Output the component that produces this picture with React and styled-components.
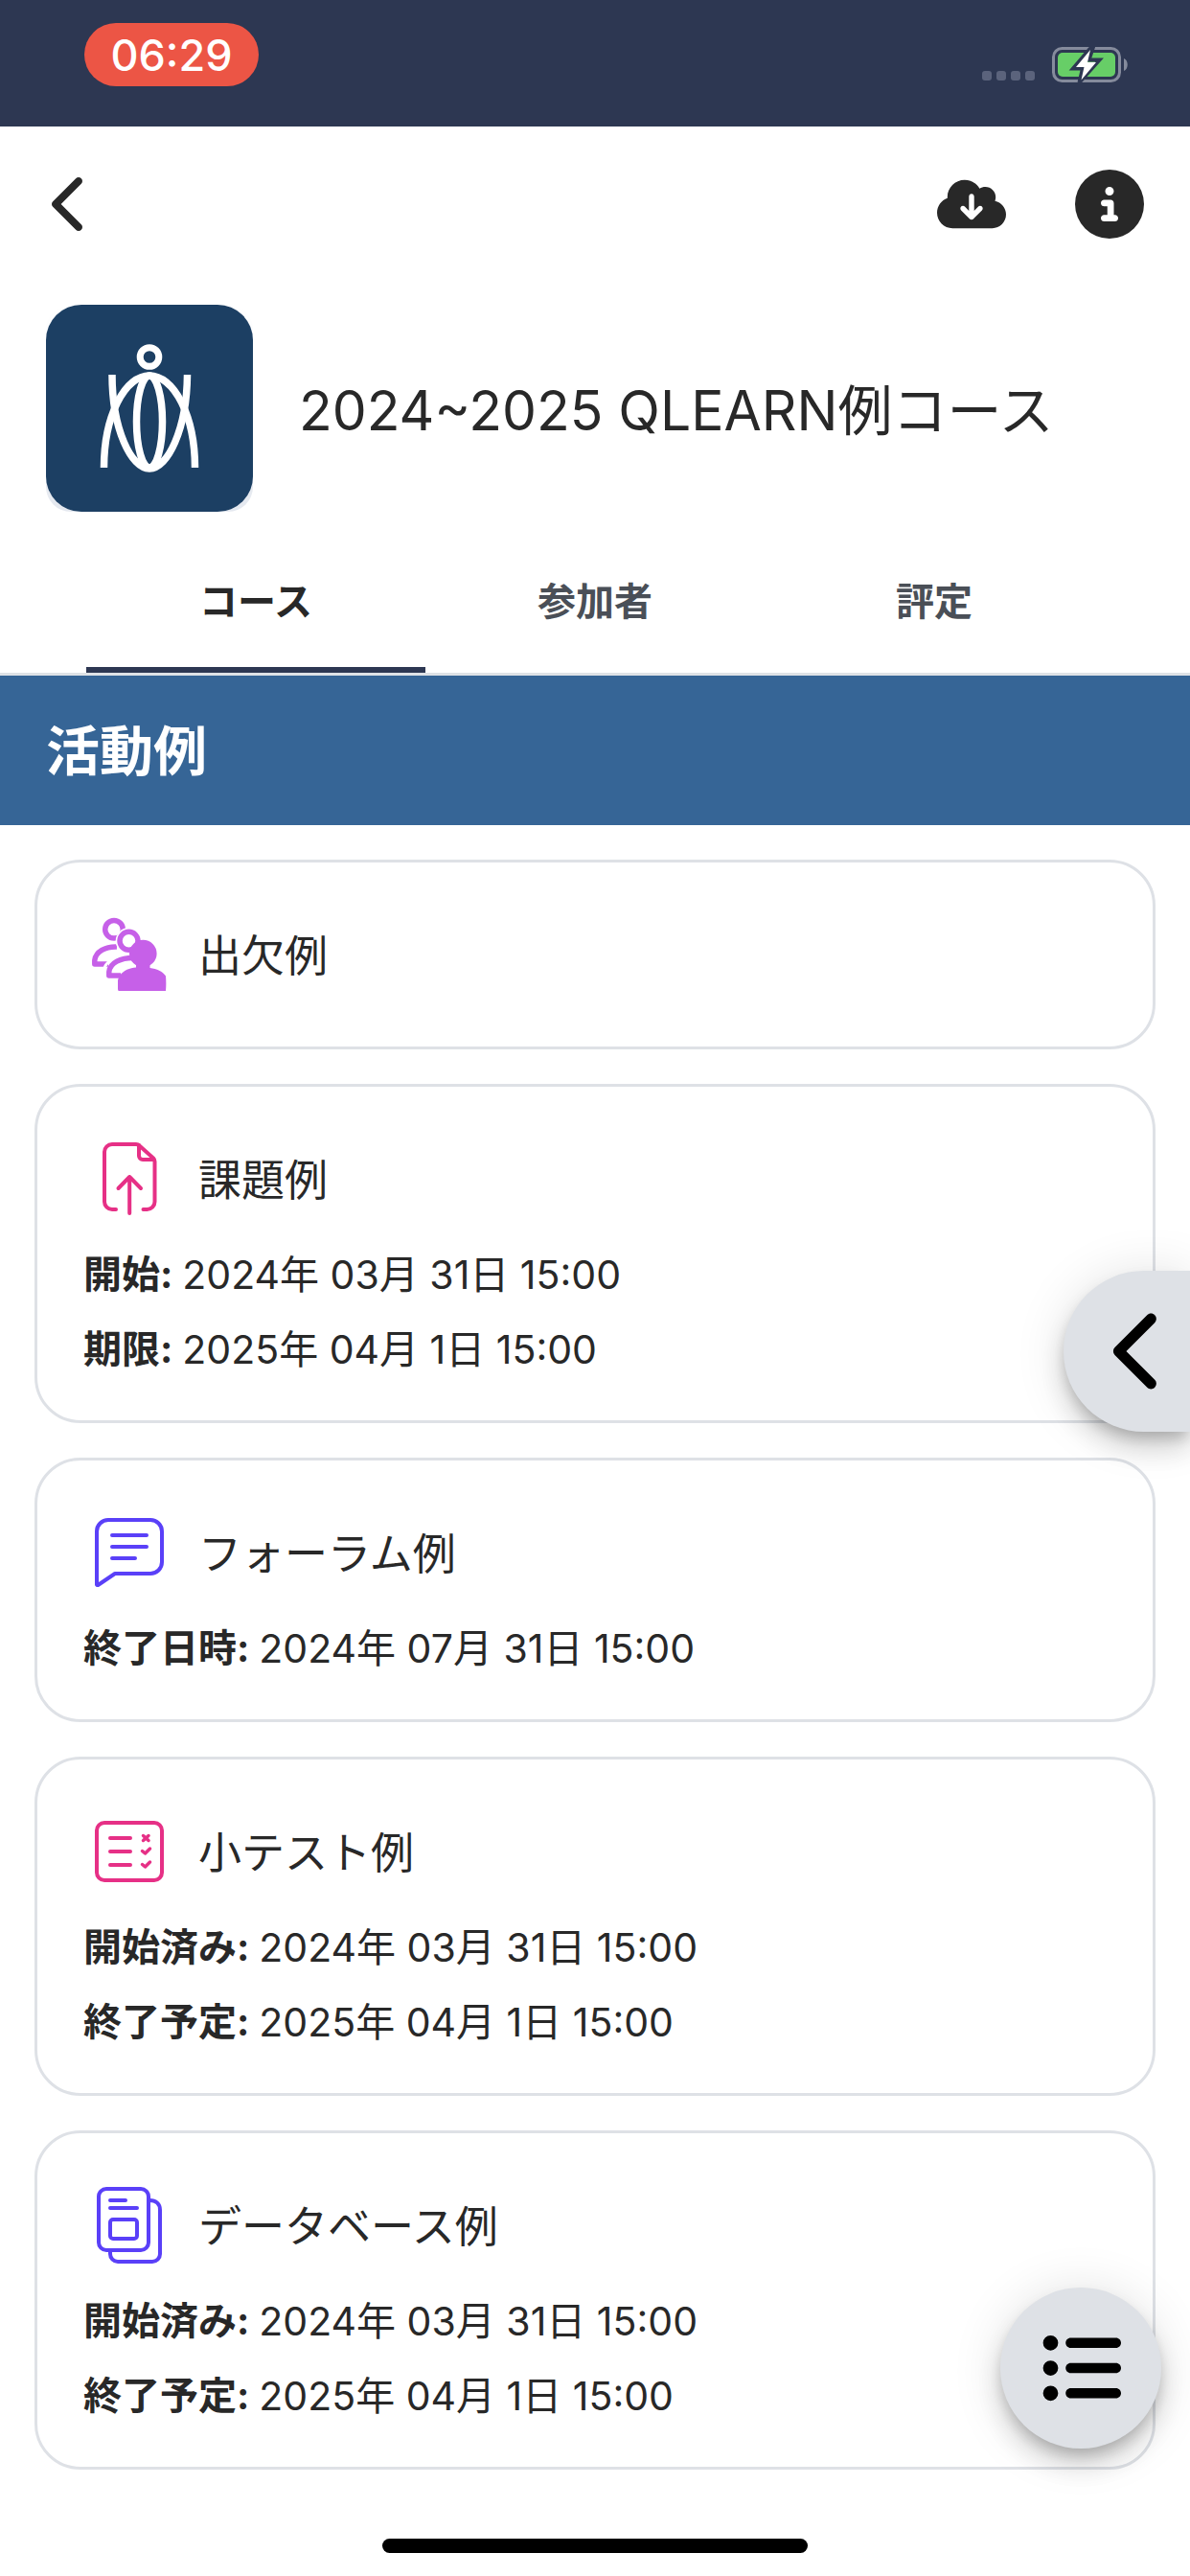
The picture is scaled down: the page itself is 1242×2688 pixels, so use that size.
import React, { useState } from "react";
import styled, { createGlobalStyle } from "styled-components";
import {
  FaChevronLeft,
  FaCloudArrowDown,
  FaCircleInfo,
  FaListUl,
} from "react-icons/fa6";

const GlobalStyle = createGlobalStyle`
  * { box-sizing: border-box; }
  body {
    margin: 0;
    background: #fff;
    color: #282828;
    font-family: Inter, "Noto Sans CJK JP", sans-serif;
  }
  button {
    padding: 0;
    border: 0;
    background: none;
    color: inherit;
    font: inherit;
    cursor: pointer;
  }
  svg { display: block; }
`;

const Page = styled.div`
  display: flex;
  flex-direction: column;
  min-height: 100vh;
`;

const StatusBar = styled.div`
  display: flex;
  align-items: flex-start;
  justify-content: space-between;
  height: 132px;
  padding: 24px 64px 0 88px;
  background: #2d3752;
`;

const Clock = styled.time`
  display: flex;
  align-items: center;
  justify-content: center;
  width: 182px;
  height: 66px;
  border-radius: 33px;
  background: #ec5545;
  color: #fff;
  font-size: 45px;
  font-weight: 500;
`;

const StatusIcons = styled.div`
  display: flex;
  align-items: flex-end;
  gap: 18px;
  padding-top: 24px;
`;

const Signal = styled.div`
  display: flex;
  gap: 5px;
  padding-bottom: 2px;
`;

const SignalDot = styled.span`
  width: 10px;
  height: 10px;
  border-radius: 3px;
  background: #5b637c;
`;

const Toolbar = styled.div`
  display: flex;
  align-items: center;
  justify-content: space-between;
  height: 162px;
  padding: 0 48px 0 42px;
`;

const ToolbarButtons = styled.div`
  display: flex;
  gap: 72px;
`;

const IconButton = styled.button`
  font-size: ${(props) => props.$size}px;
`;

const CourseHeader = styled.header`
  display: flex;
  align-items: center;
  gap: 48px;
  padding: 24px 48px;
`;

const CourseLogo = styled.div`
  flex: none;
  width: 216px;
  height: 216px;
  border-radius: 26px;
  overflow: hidden;
  background: linear-gradient(#fff, #e4e8ef);
`;

const CourseTitle = styled.h1`
  margin: 0;
  padding-top: 6px;
  font-size: 57px;
  font-weight: 400;
  line-height: 72px;
`;

const Tabs = styled.div`
  display: flex;
  height: 147px;
  padding: 0 90px;
  border-bottom: 3px solid #dee2e6;
`;

const Tab = styled.button`
  && {
    flex: 1;
    padding-bottom: 4px;
    border-bottom: 6px solid ${(props) => (props.$active ? "#2d3752" : "transparent")};
    color: ${(props) => (props.$active ? "#282828" : "#4a4f57")};
    font-size: 40px;
    font-weight: 700;
  }
`;

const SectionTitle = styled.h2`
  display: flex;
  align-items: center;
  height: 156px;
  margin: 0;
  padding: 0 48px 8px;
  background: #366596;
  color: #fff;
  font-size: 56px;
  font-weight: 700;
`;

const ActivityList = styled.ul`
  display: flex;
  flex-direction: column;
  gap: 36px;
  margin: 0;
  padding: 36px;
  list-style: none;
`;

const Card = styled.li`
  padding: 36px 48px;
  border: 3px solid #dee1e6;
  border-radius: 48px;
`;

const CardHead = styled.a`
  display: flex;
  align-items: center;
  gap: 30px;
  height: 120px;
  padding-left: 6px;
  color: inherit;
  font-size: 45px;
  text-decoration: none;
`;

const CardName = styled.span`
  padding-bottom: 4px;
`;

const DateRow = styled.p`
  display: flex;
  align-items: center;
  gap: 10px;
  height: 78px;
  margin: 0;
  padding-bottom: 4px;
  font-size: 41px;
`;

const DateLabel = styled.strong`
  font-size: 40px;
  font-weight: 700;
`;

const shadow = `
  box-shadow: 0 9px 15px -3px rgba(0, 0, 0, 0.2),
    0 18px 30px 0 rgba(0, 0, 0, 0.14),
    0 3px 54px 0 rgba(0, 0, 0, 0.12);
`;

const FloatButton = styled.button`
  && {
    position: fixed;
    display: flex;
    align-items: center;
    justify-content: center;
    height: 168px;
    background: #dee1e6;
    color: #000;
    ${shadow}
  }
`;

const DrawerButton = styled(FloatButton)`
  && {
    top: 1326px;
    right: 0;
    width: 132px;
    padding-left: 28px;
    border-radius: 84px 0 0 84px;
    font-size: 90px;
  }
`;

const IndexButton = styled(FloatButton)`
  && {
    right: 30px;
    bottom: 133px;
    width: 168px;
    border-radius: 50%;
    font-size: 84px;
  }
`;

const HomeArea = styled.footer`
  display: flex;
  justify-content: center;
  margin-top: auto;
  padding: 36px 0 24px;
`;

const HomeIndicator = styled.div`
  width: 444px;
  height: 15px;
  border-radius: 8px;
  background: #000;
`;

const Battery = () => (
  <svg width="80" height="38" viewBox="0 0 80 38" fill="none">
    <rect x="1.5" y="2.5" width="69" height="34" rx="9" stroke="#858b9c" strokeWidth="3" />
    <path d="M75 13 C80 15 80 24 75 26 Z" fill="#858b9c" />
    <rect x="6" y="7" width="60" height="25" rx="5" fill="#67ce67" />
    <path
      d="M39.500 3 L22 23.500 H32 L28.500 38 L49.500 14.500 H38.500 L43 1 Z"
      fill="#67ce67"
      stroke="#2d3752"
      strokeWidth="4"
    />
    <path d="M40 4 L25 22 H33.500 L30.500 35.500 L46 17 H37 Z" fill="#fff" />
  </svg>
);

const CourseMark = () => (
  <svg width="216" height="216" viewBox="0 0 216 216" fill="none">
    <rect width="216" height="216" rx="37" fill="#1c3f63" />
    <g stroke="#fff" strokeWidth="7.500">
      <circle cx="108" cy="54.500" r="9.800" strokeWidth="7" />
      <path d="M60.500 170 A47.500 96 0 0 1 155.500 170" />
      <path d="M69 73 C69 130 89 171 108 171 C127 171 147 130 147.500 73" />
      <ellipse cx="108" cy="122" rx="13.500" ry="48" />
    </g>
  </svg>
);

const ActivitySvg = styled.svg`
  flex: none;
  width: 84px;
  height: 84px;
  fill: none;
  stroke: ${(props) => props.$color};
  stroke-width: 4;
  stroke-linecap: round;
  stroke-linejoin: round;
`;

const AttendanceIcon = () => (
  <ActivitySvg viewBox="0 0 84 84" $color="#c660e8">
    <g strokeWidth="5.500" strokeLinecap="butt">
      <circle cx="26" cy="15.800" r="9.300" />
      <path d="M20 52 H5.800 V48 C7 39 17 33.500 29 34" />
      <circle cx="41.500" cy="27.800" r="13.800" fill="#fff" stroke="none" />
      <path d="M15 68 V59 C17 49 28 42 40 41" stroke="#fff" strokeWidth="3" />
      <circle cx="41.500" cy="27.800" r="9.500" />
      <path d="M33 64 H20.800 V60 C22 50.500 33 45.500 46 45.500" />
    </g>
    <g fill="#c660e8" stroke="none">
      <circle cx="56.300" cy="41" r="14.300" />
      <path d="M49 52 H63.500 V56 C71 57 77 60 80 64.500 Q80.700 72 80 80 H31 Q30 80 30 78 V69 C32 60 41 56 49 55.500 Z" />
    </g>
  </ActivitySvg>
);

const AssignIcon = () => (
  <ActivitySvg viewBox="0 0 84 84" $color="#e63086">
    <path d="M28 74 H24 A8 8 0 0 1 16 66 V14 A8 8 0 0 1 24 6 H49 Q51 6 52.500 7.500 L67 20.500 Q68.500 22 68.500 24 V66 A8 8 0 0 1 60.500 74 H56.500" />
    <path d="M52 7 V18 A4 4 0 0 0 56 22 H67" />
    <path d="M42.200 78 V40 M30.500 52 L42.200 40 L54 52" />
  </ActivitySvg>
);

const ForumIcon = () => (
  <ActivitySvg viewBox="0 0 84 84" $color="#5a40f8">
    <path d="M8 75.500 V20 A12 12 0 0 1 20 8 H64 A12 12 0 0 1 76 20 V52 A12 12 0 0 1 64 64 H27 L10 75.500 Q8.500 76.500 8 75.500 Z" />
    <path d="M24 24 H60 M24 36 H60 M24 48 H48" />
  </ActivitySvg>
);

const QuizIcon = () => (
  <ActivitySvg viewBox="0 0 84 84" $color="#e63086">
    <rect x="8" y="12" width="68" height="60" rx="8" />
    <path d="M22 28 H43 M22 42 H43 M22 56 H43" />
    <path d="M56.500 25.500 L62 30.500 M62 25.500 L56.500 30.500 M55.500 41.500 L58.500 44 L63.500 39 M55.500 55.500 L58.500 58 L63.500 53" strokeWidth="3.500" />
  </ActivitySvg>
);

const DatabaseIcon = () => (
  <ActivitySvg viewBox="0 0 84 84" $color="#5a40f8">
    <rect x="10" y="4" width="52" height="64" rx="8" />
    <path d="M22 16 H38 M22 24 H50" />
    <rect x="22" y="36" width="28" height="20" rx="3" />
    <path d="M63 16 C70 16 74 20 74 26 V72 A8 8 0 0 1 66 80 H30 A8 8 0 0 1 22 72 V69" />
  </ActivitySvg>
);

const tabs = ["コース", "参加者", "評定"];

const activities = [
  { name: "出欠例", icon: <AttendanceIcon />, dates: [] },
  {
    name: "課題例",
    icon: <AssignIcon />,
    dates: [
      ["開始:", "2024年 03月 31日 15:00"],
      ["期限:", "2025年 04月 1日 15:00"],
    ],
  },
  {
    name: "フォーラム例",
    icon: <ForumIcon />,
    dates: [["終了日時:", "2024年 07月 31日 15:00"]],
  },
  {
    name: "小テスト例",
    icon: <QuizIcon />,
    dates: [
      ["開始済み:", "2024年 03月 31日 15:00"],
      ["終了予定:", "2025年 04月 1日 15:00"],
    ],
  },
  {
    name: "データベース例",
    icon: <DatabaseIcon />,
    dates: [
      ["開始済み:", "2024年 03月 31日 15:00"],
      ["終了予定:", "2025年 04月 1日 15:00"],
    ],
  },
];

export default function App() {
  const [activeTab, setActiveTab] = useState(0);

  return (
    <Page>
      <GlobalStyle />
      <StatusBar>
        <Clock>06:29</Clock>
        <StatusIcons>
          <Signal>
            <SignalDot />
            <SignalDot />
            <SignalDot />
            <SignalDot />
          </Signal>
          <Battery />
        </StatusIcons>
      </StatusBar>

      <Toolbar>
        <IconButton $size={64} aria-label="戻る">
          <FaChevronLeft />
        </IconButton>
        <ToolbarButtons>
          <IconButton $size={72} aria-label="ダウンロード">
            <FaCloudArrowDown />
          </IconButton>
          <IconButton $size={72} aria-label="コース情報">
            <FaCircleInfo />
          </IconButton>
        </ToolbarButtons>
      </Toolbar>

      <CourseHeader>
        <CourseLogo>
          <CourseMark />
        </CourseLogo>
        <CourseTitle>2024~2025 QLEARN例コース</CourseTitle>
      </CourseHeader>

      <Tabs role="tablist">
        {tabs.map((tab, i) => (
          <Tab
            key={tab}
            role="tab"
            aria-selected={i === activeTab}
            $active={i === activeTab}
            onClick={() => setActiveTab(i)}
          >
            {tab}
          </Tab>
        ))}
      </Tabs>

      <main>
        <SectionTitle>活動例</SectionTitle>
        <ActivityList>
          {activities.map((activity) => (
            <Card key={activity.name}>
              <CardHead href="#">
                {activity.icon}
                <CardName>{activity.name}</CardName>
              </CardHead>
              {activity.dates.map(([label, date]) => (
                <DateRow key={label}>
                  <DateLabel>{label}</DateLabel>
                  <span>{date}</span>
                </DateRow>
              ))}
            </Card>
          ))}
        </ActivityList>
      </main>

      <DrawerButton aria-label="ブロックを開く">
        <FaChevronLeft />
      </DrawerButton>
      <IndexButton aria-label="コースインデックス">
        <FaListUl />
      </IndexButton>

      <HomeArea>
        <HomeIndicator />
      </HomeArea>
    </Page>
  );
}
